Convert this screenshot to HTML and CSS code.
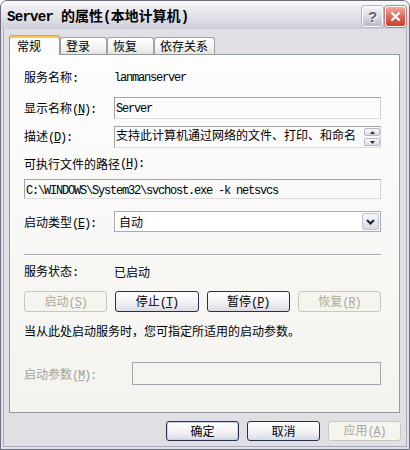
FILE: index.html
```html
<!DOCTYPE html>
<html lang="zh-CN">
<head>
    <meta charset="UTF-8">
    <title>Server 的属性(本地计算机)</title>
    <link rel="stylesheet" href="styles.css">
</head>
<body>
    <div class="window">
        <div class="titlebar">
            <div class="title"><span class="lat">Server </span>的属性<span class="lat">(</span>本地计算机<span class="lat">)</span></div>
            <div class="caption-buttons">
                <div class="cap help">?</div>
                <div class="cap close">
                    <svg width="11" height="11" viewBox="0 0 11 11"><path d="M1.5 1.5L9.5 9.5M9.5 1.5L1.5 9.5" stroke="#fff" stroke-width="2.2"/></svg>
                </div>
            </div>
        </div>

        <div class="client">
            <div class="tabs">
                <div class="tab active">常规</div>
                <div class="tab">登录</div>
                <div class="tab">恢复</div>
                <div class="tab">依存关系</div>
            </div>

            <div class="page">
                <div class="row line">
                    <span class="label">服务名称<span class="lat">:</span></span>
                    <span class="lat">lanmanserver</span>
                </div>

                <div class="row display-row">
                    <span class="label">显示名称<span class="lat">(<u>N</u>):</span></span>
                    <div class="field"><span class="lat">Server</span></div>
                </div>

                <div class="row desc-row">
                    <span class="label">描述<span class="lat">(<u>D</u>):</span></span>
                    <div class="field desc">
                        <span class="desc-text">支持此计算机通过网络的文件、打印、和命名</span>
                        <div class="spin">
                            <div class="spin-btn"><svg width="5" height="3" viewBox="0 0 5 3"><polygon points="0,3 2.5,0 5,3" fill="#2a2a3a"/></svg></div>
                            <div class="spin-btn"><svg width="5" height="3" viewBox="0 0 5 3"><polygon points="0,0 5,0 2.5,3" fill="#2a2a3a"/></svg></div>
                        </div>
                    </div>
                </div>

                <div class="row line exe-label">可执行文件的路径<span class="lat">(<u>H</u>):</span></div>

                <div class="field path"><span class="lat">C:\WINDOWS\System32\svchost.exe -k netsvcs</span></div>

                <div class="row startup-row">
                    <span class="label">启动类型<span class="lat">(<u>E</u>):</span></span>
                    <div class="select">
                        <span>自动</span>
                        <div class="drop">
                            <svg width="9" height="6" viewBox="0 0 9 6"><polyline points="1,1 4.5,4.5 8,1" fill="none" stroke="#1e2230" stroke-width="2"/></svg>
                        </div>
                    </div>
                </div>

                <div class="separator"></div>

                <div class="row line status-row">
                    <span class="label">服务状态<span class="lat">:</span></span>
                    <span>已启动</span>
                </div>

                <div class="service-buttons">
                    <button class="btn" disabled>启动<span class="lat">(<u>S</u>)</span></button>
                    <button class="btn">停止<span class="lat">(<u>T</u>)</span></button>
                    <button class="btn">暂停<span class="lat">(<u>P</u>)</span></button>
                    <button class="btn" disabled>恢复<span class="lat">(<u>R</u>)</span></button>
                </div>

                <div class="row line hint">当从此处启动服务时，您可指定所适用的启动参数。</div>

                <div class="row params-row">
                    <span class="label disabled">启动参数<span class="lat">(<u>M</u>):</span></span>
                    <div class="field params"></div>
                </div>
            </div>

            <div class="dialog-buttons">
                <button class="btn default">确定</button>
                <button class="btn">取消</button>
                <button class="btn" disabled>应用<span class="lat">(<u>A</u>)</span></button>
            </div>
        </div>
    </div>
</body>
</html>
```

FILE: styles.css
```css
body {
    margin: 0;
    font-family: "Noto Sans CJK SC", sans-serif;
    font-size: 12px;
    color: #000;
    background: #fff;
}
.lat {
    font-family: "Liberation Mono", monospace;
    letter-spacing: -1.2px;
}
u {
    text-underline-offset: 1px;
}

/* window frame */
.window {
    width: 410px;
    height: 450px;
    box-sizing: border-box;
    border: 1px solid #6c6c80;
    border-radius: 7px 7px 0 0;
    background: #e2e1e8;
    padding: 0 2px 2px;
    display: flex;
    flex-direction: column;
}
.titlebar {
    height: 28px;
    flex: none;
    margin: 0 -2px;
    padding: 0 3px 0 6px;
    display: flex;
    align-items: center;
    justify-content: space-between;
    background: linear-gradient(#fdfdfe, #ececf1 25%, #e0e0e7 60%, #cfcfda);
    border-radius: 6px 6px 0 0;
}
.title {
    font-weight: bold;
    font-size: 14px;
    line-height: 16px;
    margin-top: 2px;
}
.title .lat {
    letter-spacing: -0.7px;
}
.caption-buttons {
    display: flex;
    gap: 2px;
    margin-top: 2px;
}
.cap {
    width: 21px;
    height: 21px;
    box-sizing: border-box;
    border: 1px solid #fdfdfd;
    border-radius: 3px;
    display: flex;
    align-items: center;
    justify-content: center;
    box-shadow: 0 0 0 1px #b4b4c4;
}
.help {
    background: linear-gradient(#f4f4f8, #d9d9e3 55%, #b7b7c8);
    color: #626274;
    font: bold 15px "Liberation Sans", sans-serif;
    text-shadow: 1px 1px 0 #fff;
}
.close {
    background: linear-gradient(#f3a898, #df6452 55%, #c3412f);
    box-shadow: 0 0 0 1px #b8848a;
}

.client {
    flex: 1;
    border: 1px solid #a9a8b9;
    border-top: 0;
    padding: 6px 0 0 5px;
    background: #e0dfe3;
}

/* tabs */
.tabs {
    height: 19px;
    display: flex;
    align-items: flex-end;
}
.tab {
    height: 17px;
    min-width: 47px;
    box-sizing: border-box;
    border: 1px solid #9aa4ab;
    border-bottom: 0;
    border-radius: 3px 3px 0 0;
    background: linear-gradient(#ffffff, #f4f4f1 55%, #e4e3de);
    padding: 0 6px 0 5px;
    line-height: 16px;
}
.tab.active {
    width: 51px;
    height: 20px;
    margin-bottom: -1px;
    padding-left: 7px;
    position: relative;
    z-index: 1;
    background: #fcfcfe;
    border-color: #e8a23a #919b9c #fcfcfe;
    box-shadow: inset 0 2px 0 #ffc548;
    line-height: 20px;
}

/* tab page */
.page {
    width: 391px;
    height: 359px;
    box-sizing: border-box;
    border: 1px solid #919b9c;
    background: linear-gradient(#fdfdfe, #f4f3ee);
    padding: 15px 18px 0 14px;
}
.row {
    display: flex;
    align-items: center;
}
.line {
    height: 16px;
    line-height: 16px;
}
.label {
    width: 90px;
    flex: none;
}
.label.disabled {
    color: #a3a29c;
}
.field {
    flex: 1;
    box-sizing: border-box;
    border: 1px solid;
    border-color: #a2a2aa #cfcfd4 #dcdce0 #a2a2aa;
    line-height: 16px;
}
.display-row {
    margin-top: 11px;
}
.display-row .field {
    height: 22px;
    padding: 1px 1px 0;
}
.desc-row {
    margin-top: 7px;
    align-items: flex-start;
}
.desc-row .label {
    margin-top: 1px;
}
.field.desc {
    height: 22px;
    display: flex;
    padding-left: 1px;
    overflow: hidden;
}
.desc-text {
    flex: 1;
    white-space: nowrap;
    overflow: hidden;
}
.spin {
    display: flex;
    flex-direction: column;
    gap: 2px;
    margin: 1px 0 0 4px;
}
.spin-btn {
    width: 16px;
    height: 8px;
    box-sizing: border-box;
    border: 1px solid #b3b6c6;
    border-radius: 2px;
    background: linear-gradient(#fbfbfd, #dcdce6);
    display: flex;
    align-items: center;
    justify-content: center;
}
.exe-label {
    margin-top: 8px;
}
.field.path {
    margin-top: 7px;
    height: 20px;
    padding: 1px 1px 0;
    line-height: 16px;
}
.startup-row {
    margin-top: 12px;
}
.select {
    flex: 1;
    height: 21px;
    box-sizing: border-box;
    border: 1px solid #a5acb5;
    background: #fff;
    display: flex;
    align-items: center;
    justify-content: space-between;
    padding: 1px 1px 1px 4px;
}
.drop {
    width: 17px;
    height: 17px;
    box-sizing: border-box;
    border: 1px solid #c2c4d2;
    border-radius: 2px;
    background: linear-gradient(#f7f7fa, #d9d9e4);
    display: flex;
    align-items: center;
    justify-content: center;
}
.separator {
    margin-top: 22px;
    border-top: 1px solid #a9a8ae;
    border-bottom: 1px solid #fff;
}
.status-row {
    margin-top: 8px;
}

/* buttons */
.btn {
    height: 21px;
    box-sizing: border-box;
    border: 1px solid #24324e;
    border-radius: 3px;
    background: linear-gradient(#ffffff, #f4f4f7 50%, #dadae4);
    font-family: "Noto Sans CJK SC", sans-serif;
    font-size: 12px;
    color: #000;
    padding: 0;
    line-height: 16px;
}
.btn:disabled {
    border-color: #c8c7c0;
    background: #f5f4ef;
    color: #aca899;
}
.btn.default {
    box-shadow: inset 0 0 0 1px #c6d2ea;
}
.service-buttons {
    margin-top: 11px;
    display: flex;
    gap: 8px;
}
.service-buttons .btn {
    flex: 1;
}
.hint {
    margin-top: 11px;
}
.params-row {
    margin-top: 23px;
}
.params-row .label {
    width: 108px;
}
.field.params {
    height: 23px;
    border-color: #a5a5ad;
}
.dialog-buttons {
    margin: 8px 5px 0 0;
    display: flex;
    justify-content: flex-end;
    gap: 8px;
}
.dialog-buttons .btn {
    width: 73px;
    height: 20px;
}
```
